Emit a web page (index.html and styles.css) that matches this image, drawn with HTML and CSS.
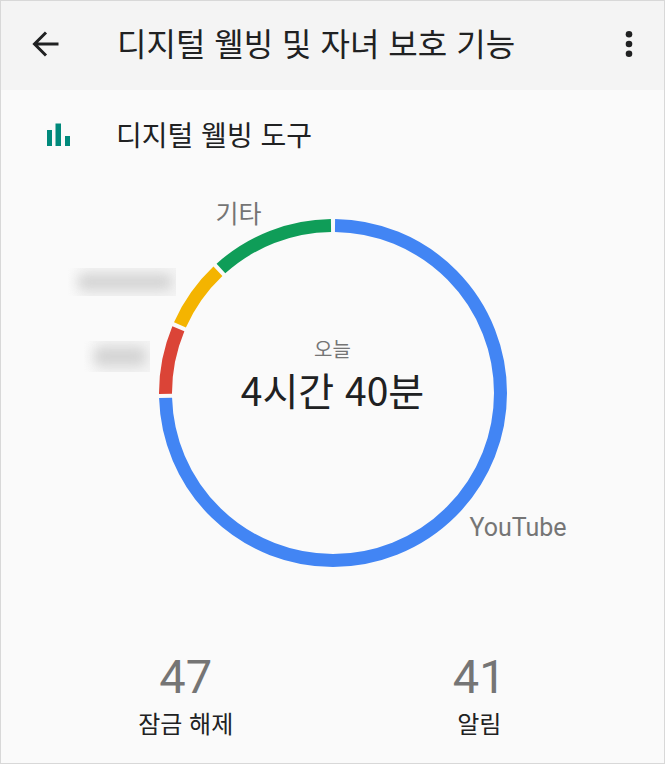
FILE: index.html
```html
<!DOCTYPE html>
<html lang="ko">
<head>
  <meta charset="UTF-8" />
  <meta name="viewport" content="width=device-width, initial-scale=1.0"/>
  <title>디지털 웰빙 및 자녀 보호 기능</title>
  <link rel="stylesheet" href="styles.css">
</head>
<body>

<div class="screen">
  <header class="app-bar">
    <button type="button" class="icon-btn" aria-label="뒤로">
      <svg viewBox="0 0 28 28" width="28" height="28" fill="none" stroke="#202122" stroke-width="3">
        <path d="M26.500 14H3M14 2.500L2.500 14L14 25.500"/>
      </svg>
    </button>
    <h1>디지털 웰빙 및 자녀 보호 기능</h1>
    <button type="button" class="icon-btn" aria-label="옵션 더보기">
      <svg viewBox="0 0 28 28" width="28" height="28" fill="#202122">
        <circle cx="14" cy="4.300" r="3.300"/>
        <circle cx="14" cy="14" r="3.300"/>
        <circle cx="14" cy="23.700" r="3.300"/>
      </svg>
    </button>
  </header>

  <main>
    <div class="section-title">
      <svg viewBox="0 0 24 24" width="24" height="24" fill="#00897b">
        <rect x="0" y="7" width="5" height="16"/>
        <rect x="8.500" y="0.500" width="5.500" height="22.500"/>
        <rect x="18" y="13" width="5" height="10"/>
      </svg>
      <h2>디지털 웰빙 도구</h2>
    </div>

    <div class="chart">
      <!-- one unit of dash length is one degree, clockwise from the top -->
      <svg class="ring" viewBox="0 0 348 348" aria-hidden="true">
        <g fill="none" stroke-width="13" transform="rotate(-90 174 174)">
          <circle cx="174" cy="174" r="167.500" pathLength="360" stroke="#4285f4" stroke-dasharray="267.600 92.400" stroke-dashoffset="-0.700"/>
          <circle cx="174" cy="174" r="167.500" pathLength="360" stroke="#db4437" stroke-dasharray="22.900 337.100" stroke-dashoffset="-269.700"/>
          <circle cx="174" cy="174" r="167.500" pathLength="360" stroke="#f4b400" stroke-dasharray="22.600 337.400" stroke-dashoffset="-294"/>
          <circle cx="174" cy="174" r="167.500" pathLength="360" stroke="#0f9d58" stroke-dasharray="41.300 318.700" stroke-dashoffset="-318"/>
        </g>
      </svg>
      <div class="total">
        <span class="day">오늘</span>
        <span class="time">4시간 40분</span>
      </div>
      <span class="label label-etc">기타</span>
      <span class="label label-youtube">YouTube</span>
      <span class="hidden-name name-long"></span>
      <span class="hidden-name name-short"></span>
    </div>

    <div class="stats">
      <div class="stat">
        <span class="count">47</span>
        <span class="caption">잠금 해제</span>
      </div>
      <div class="stat">
        <span class="count">41</span>
        <span class="caption">알림</span>
      </div>
    </div>
  </main>
</div>

</body>
</html>
```
FILE: styles.css
```css
* {
  margin: 0;
  padding: 0;
  box-sizing: border-box;
}

body {
  background: #fafafa;
  color: #202122;
  font-family: "Noto Sans CJK KR", sans-serif;
}

.screen {
  min-height: 100vh;
  border: 1px solid #d8d8d8;
}

.app-bar {
  display: flex;
  align-items: center;
  height: 89px;
  padding: 0 15px 3px 25px;
  background: #f4f4f4;
}

.app-bar h1 {
  flex: 1;
  padding: 0 0 4px 51px;
  font-size: 32px;
  font-weight: 400;
  line-height: 48px;
}

.icon-btn {
  display: flex;
  align-items: center;
  justify-content: center;
  width: 40px;
  height: 40px;
  border: none;
  background: none;
  cursor: pointer;
}

.section-title {
  display: flex;
  align-items: center;
  gap: 45px;
  height: 90px;
  padding-left: 46px;
}

.section-title h2 {
  padding-bottom: 2px;
  font-size: 28px;
  font-weight: 400;
  line-height: 40px;
}

.chart {
  position: relative;
  width: 348px;
  height: 348px;
  margin: 39px auto 0;
  display: flex;
  align-items: center;
  justify-content: center;
}

.ring {
  position: absolute;
  inset: 0;
}

.total {
  display: flex;
  flex-direction: column;
  align-items: center;
  padding-bottom: 36px;
}

.day {
  color: #757575;
  font-size: 20px;
  line-height: 28px;
}

.time {
  font-size: 39px;
  line-height: 52px;
}

/* labels sit around the ring, next to their segment */
.label {
  position: absolute;
  color: #757575;
  font-size: 25px;
  line-height: 32px;
}

.label-etc {
  left: 57px;
  top: -23px;
}

.label-youtube {
  left: 311px;
  top: 293px;
  font-family: Roboto, sans-serif;
}

/* app names blurred for privacy */
.hidden-name {
  position: absolute;
  overflow: hidden;
  background: linear-gradient(to right, #fafafa, #f4f4f4 20px);
}

.hidden-name::before {
  content: "";
  position: absolute;
  inset: 6px 4px 6px 10px;
  border-radius: 6px;
  background: #d4d4d4;
  filter: blur(6px);
}

.name-long {
  left: -91px;
  top: 49px;
  width: 108px;
  height: 28px;
}

.name-short {
  left: -75px;
  top: 122px;
  width: 66px;
  height: 31px;
}

.stats {
  display: flex;
  justify-content: center;
  padding: 82px 38px 14px;
}

.stat {
  flex: 1;
  display: flex;
  flex-direction: column;
  align-items: center;
}

.count {
  color: #757575;
  font-family: Roboto, sans-serif;
  font-size: 47px;
  line-height: 56px;
}

.caption {
  font-size: 24px;
  line-height: 36px;
}
```
